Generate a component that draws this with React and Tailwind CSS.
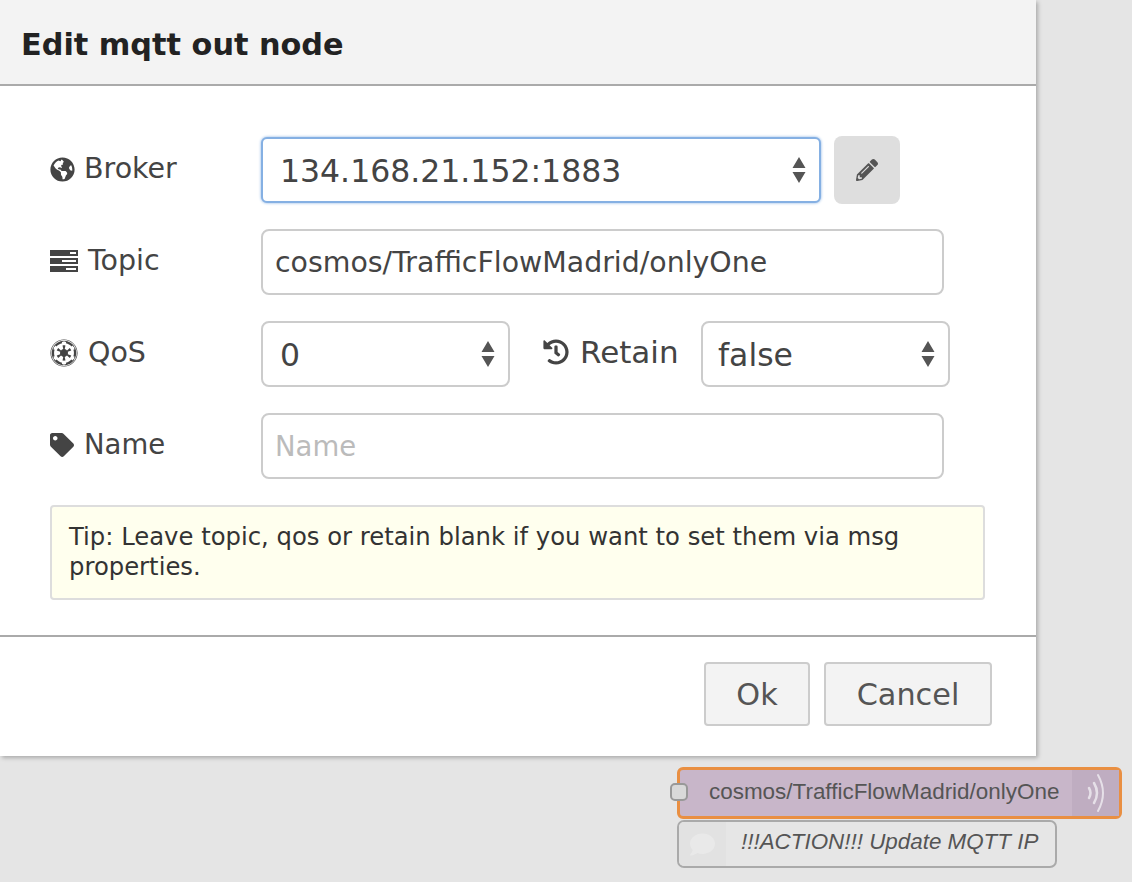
import React from 'react';
import { FaEmpire, FaGlobeAmericas, FaHistory, FaPencilAlt, FaTag, FaComment } from 'react-icons/fa';

const TasksIcon = () => (
  <svg width="28" height="22" viewBox="0 0 28 22" className="shrink-0">
    <path
      fillRule="evenodd"
      fill="#444"
      d="M0 0h28v6H0zM20 2v2h6V2zM0 8h28v6H0zM12 10v2h14v-2zM0 16h28v6H0zM16 18v2h10v-2z"
    />
  </svg>
);

const SelectArrows = () => (
  <svg width="14" height="26" viewBox="0 0 14 26" className="shrink-0">
    <path fill="#555" d="M7 0l6.500 11H.5zM7 26L.5 15h13z" />
  </svg>
);

const Label = ({ icon, text, gap, className = 'w-[211px] text-[28.500px]' }) => (
  <div className={`flex items-center text-[#444] -mt-[2px] ${gap} ${className}`}>
    {icon}
    <span>{text}</span>
  </div>
);

const Select = ({ value, className }) => (
  <div className={`flex items-center justify-between bg-white text-[#444] text-[31.500px] ${className}`}>
    <span className="mt-[3px]">{value}</span>
    <SelectArrows />
  </div>
);

const App = () => {
  return (
    <div className="w-[1132px] h-[882px] bg-[#e5e5e5] overflow-hidden font-['DejaVu_Sans',sans-serif]">
      {/* Dialog */}
      <div className="w-[1036px] h-[756px] bg-white shadow-[2px_2px_4px_rgba(0,0,0,0.25)] flex flex-col">
        <div className="h-[86px] shrink-0 bg-[#f3f3f3] border-b-2 border-[#aaa] pl-[21px] flex items-center">
          <h1 className="text-[30.300px] font-bold text-[#222] mt-[6px] whitespace-nowrap">Edit mqtt out node</h1>
        </div>

        <div className="h-[551px] shrink-0 border-b-2 border-[#aaa] pt-[51px] pl-[50px] flex flex-col gap-[26px]">
          <div className="flex items-center h-[66px]">
            <Label icon={<FaGlobeAmericas size={25} />} text="Broker" gap="gap-[9px]" />
            <Select
              value="134.168.21.152:1883"
              className="w-[560px] h-[66px] pl-[17px] pr-[13px] rounded-md border-2 border-[#85b0e3] shadow-[0_0_3px_#85b0e3]"
            />
            <div className="ml-[13px] w-[66px] h-[68px] rounded-lg bg-[#dedede] flex items-center justify-center text-[#555]">
              <FaPencilAlt size={22} />
            </div>
          </div>

          <div className="flex items-center h-[66px]">
            <Label icon={<TasksIcon />} text="Topic" gap="gap-[10px]" />
            <div className="w-[683px] h-[66px] pl-[12px] flex items-center rounded-lg border-2 border-[#ccc] text-[#444] text-[28.400px] whitespace-nowrap">
              <span className="mt-[2px]">cosmos/TrafficFlowMadrid/onlyOne</span>
            </div>
          </div>

          <div className="flex items-center h-[66px]">
            <Label icon={<FaEmpire size={28} />} text="QoS" gap="gap-[10px]" />
            <Select value="0" className="w-[249px] h-[66px] pl-[17px] pr-[13px] rounded-lg border-2 border-[#ccc]" />
            <Label
              icon={<FaHistory size={26} />}
              text="Retain"
              gap="gap-[11px]"
              className="ml-[33px] w-[158px] text-[31px] -mt-[4px]"
            />
            <Select value="false" className="w-[249px] h-[66px] pl-[15px] pr-[13px] rounded-lg border-2 border-[#ccc]" />
          </div>

          <div className="flex items-center h-[66px]">
            <Label icon={<FaTag size={24} />} text="Name" gap="gap-[10px]" className="w-[211px] text-[27.500px]" />
            <div className="w-[683px] h-[66px] pl-[12px] flex items-center rounded-lg border-2 border-[#ccc] text-[#bbb] text-[27.500px]">
              <span className="mt-[2px]">Name</span>
            </div>
          </div>

          <div className="w-[935px] h-[95px] bg-[#ffffee] border-2 border-[#ddd] rounded-sm px-[17px] pt-[15px] text-[24.300px] leading-[30px] text-[#333]">
            Tip: Leave topic, qos or retain blank if you want to set them via msg properties.
          </div>
        </div>

        <div className="flex-1 flex items-start justify-end gap-[14px] pt-[25px] pr-[44px]">
          <div className="w-[106px] h-[64px] bg-[#f3f3f3] border-2 border-[#ccc] rounded-sm flex items-center justify-center text-[30.300px] text-[#555]">
            <span className="mt-[2px]">Ok</span>
          </div>
          <div className="w-[168px] h-[64px] bg-[#f3f3f3] border-2 border-[#ccc] rounded-sm flex items-center justify-center text-[30.300px] text-[#555]">
            <span className="mt-[2px]">Cancel</span>
          </div>
        </div>
      </div>

      {/* Flow nodes */}
      <div className="ml-[677px] mt-[11px] font-['Liberation_Sans',sans-serif] flex flex-col gap-[1px] items-start">
        <div className="relative w-[445px] h-[52px] rounded-[6px] border-[3px] border-[#e98f42] bg-[#c8b6c9] flex items-center">
          <div className="absolute left-[-10px] top-[13px] w-[18px] h-[18px] rounded-[5px] border-2 border-[#999] bg-[#d9d9d9]" />
          <span className="ml-[29px] -mt-[3px] flex-1 text-[22.450px] text-[#555] whitespace-nowrap">
            cosmos/TrafficFlowMadrid/onlyOne
          </span>
          <div className="w-[47px] h-full bg-[#bfadc1] flex items-center justify-center">
            <svg width="20" height="40" viewBox="0 0 20 40" fill="none" stroke="#e6e0e8" strokeLinecap="round">
              <path strokeWidth="2.500" d="M3 15q3 5 0 10" />
              <path strokeWidth="2.500" d="M8 10q6 10 0 20" />
              <path strokeWidth="2" d="M12 2q10 18 0 36" />
            </svg>
          </div>
        </div>
        <div className="w-[380px] h-[48px] rounded-[7px] border-2 border-[#aaa] bg-[#e6e6e6] flex items-center overflow-hidden">
          <div className="w-[47px] h-full bg-[#e2e2e2] flex items-center justify-center">
            <FaComment size={25} className="text-[#e9e9e9]" />
          </div>
          <span className="ml-[15px] -mt-[5px] text-[22.400px] italic text-[#555] whitespace-nowrap">
            !!!ACTION!!! Update MQTT IP
          </span>
        </div>
      </div>
    </div>
  );
};

export default App;
